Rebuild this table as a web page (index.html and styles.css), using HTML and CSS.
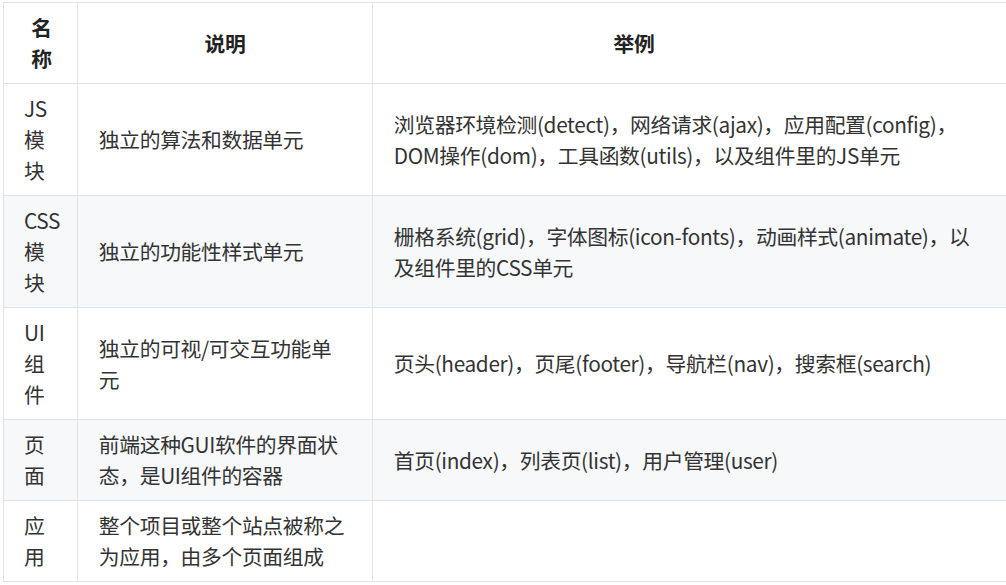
FILE: index.html
```html
<!DOCTYPE html>
<html lang="zh-CN">
<head>
<meta charset="utf-8">
<link rel="stylesheet" href="styles.css">
</head>
<body>
<table class="grid">
  <colgroup>
    <col class="c-name">
    <col class="c-desc">
    <col class="c-example">
  </colgroup>
  <thead>
    <tr>
      <th>名称</th>
      <th>说明</th>
      <th class="th-example">举例</th>
    </tr>
  </thead>
  <tbody>
    <tr>
      <td>JS模块</td>
      <td>独立的算法和数据单元</td>
      <td>浏览器环境检测(detect)，网络请求(ajax)，应用配置(config)，DOM操作(dom)，工具函数(utils)，以及组件里的JS单元</td>
    </tr>
    <tr>
      <td>CSS模块</td>
      <td>独立的功能性样式单元</td>
      <td>栅格系统(grid)，字体图标(icon-fonts)，动画样式(animate)，以及组件里的CSS单元</td>
    </tr>
    <tr>
      <td>UI组件</td>
      <td>独立的可视/可交互功能单元</td>
      <td>页头(header)，页尾(footer)，导航栏(nav)，搜索框(search)</td>
    </tr>
    <tr>
      <td>页面</td>
      <td>前端这种GUI软件的界面状态，是UI组件的容器</td>
      <td>首页(index)，列表页(list)，用户管理(user)</td>
    </tr>
    <tr>
      <td>应用</td>
      <td>整个项目或整个站点被称之为应用，由多个页面组成</td>
      <td></td>
    </tr>
  </tbody>
</table>
</body>
</html>
```

FILE: styles.css
```css
html, body {
  margin: 0;
  padding: 0;
  background: #ffffff;
}

body {
  padding: 2px 0 0 3px;
  font-family: "Noto Sans CJK SC", "Noto Sans", sans-serif;
  font-size: 20.8px;
  line-height: 31px;
  color: #333333;
}

.grid {
  border-collapse: collapse;
  table-layout: fixed;
  width: 1003px;
}

.c-name { width: 74px; }
.c-desc { width: 295px; }
.c-example { width: 634px; }

.grid th,
.grid td {
  border: 1px solid #e0e2e5;
  padding: 9px 20.8px;
  vertical-align: middle;
  text-align: left;
  letter-spacing: -0.35px;
}

.grid th {
  font-weight: bold;
  text-align: center;
  color: #222222;
}

.grid th.th-example {
  padding-right: 132px;
}

.grid tbody tr:nth-child(2n) {
  background: #f6f8fa;
}

.grid td:first-child,
.grid th:first-child {
  padding-right: 18px;
  padding-left: 20px;
}
```
